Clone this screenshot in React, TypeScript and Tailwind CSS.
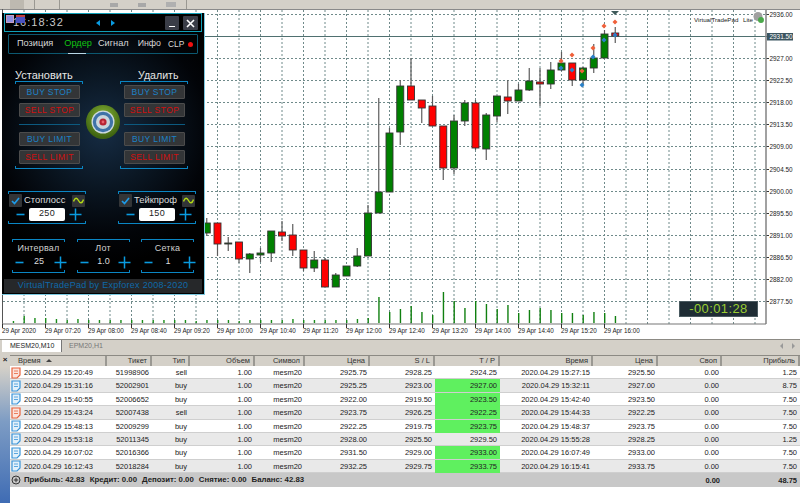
import React from "react";

type Candle = [number, number, number, number, "g" | "r"];

// body top, body bottom, wick top, wick bottom, colour; first entry sits at column 19
const candles: Candle[] = [
  [223, 233, 218, 236, "g"], [223, 244, 223, 256, "r"], [243, 244, 237, 251, "g"], [242, 259, 242, 263, "r"],
  [254, 259, 253, 273, "g"], [253, 255, 248, 262, "g"], [231, 253, 231, 262, "g"], [232, 236, 221, 241, "r"],
  [235, 250, 224, 256, "r"], [250, 268, 250, 271, "r"], [260, 268, 251, 272, "g"], [260, 287, 258, 287, "r"],
  [275, 287, 273, 287, "g"], [266, 276, 266, 276, "g"], [256, 266, 248, 267, "g"], [213, 256, 205, 256, "g"],
  [192, 213, 98, 213, "g"], [133, 192, 128, 192, "g"], [86, 132, 80, 145, "g"], [86, 100, 58, 100, "r"],
  [100, 108, 100, 123, "r"], [106, 126, 96, 126, "r"], [126, 168, 126, 180, "r"], [121, 168, 115, 174, "g"],
  [103, 121, 100, 126, "g"], [103, 148, 100, 150, "r"], [115, 149, 113, 160, "g"], [96, 116, 96, 122, "g"],
  [97, 101, 80, 114, "r"], [90, 101, 84, 101, "g"], [81, 90, 68, 91, "g"], [82, 84, 68, 106, "r"],
  [70, 84, 62, 89, "g"], [63, 70, 52, 71, "g"], [63, 80, 63, 86, "r"], [68, 80, 67, 85, "g"],
  [58, 68, 44, 73, "g"], [34, 58, 30, 58, "g"], [33, 36, 27, 43, "r"],
];

const colX = (n: number) => 2.5 + 10.75 * n;

const leftVolumes = [2, 7, 5, 5, 4, 3, 4, 3, 3, 3, 3, 3, 3, 3, 3, 3, 3, 2, 3, 3, 3, 2, 3, 3, 3, 3, 4, 3, 3, 3, 3, 3, 4];
const rightVolumeTops = [318, 297, 312, 309, 306, 312, 315, 292, 301, 308, 301, 304, 309, 305, 313, 310, 308, 310, 313, 313, 315, 312, 313, 316];

const prices = ["2936.00", "2931.50", "2927.00", "2922.50", "2918.00", "2913.50", "2909.00", "2904.50", "2900.00", "2895.50", "2891.00", "2886.50", "2882.00", "2877.50"];
const times = ["29 Apr 2020", "29 Apr 07:20", "29 Apr 08:00", "29 Apr 08:40", "29 Apr 09:20", "29 Apr 10:00", "29 Apr 10:40", "29 Apr 11:20", "29 Apr 12:00", "29 Apr 12:40", "29 Apr 13:20", "29 Apr 14:00", "29 Apr 14:40", "29 Apr 15:20", "29 Apr 16:00"];

const orangeMarks = [[604, 26], [615, 22], [593, 48], [561, 61], [572, 55], [582, 71]];
const blueMarks = [[604, 40], [615, 35], [593, 57], [561, 68], [572, 70], [582, 85]];

const columns = "grid grid-cols-[97px_45px_38px_65px_50px_65px_65px_65px_93px_65px_64px_78px]";

const headers = ["Время", "Тикет", "Тип", "Объем", "Символ", "Цена", "S / L", "T / P", "Время", "Цена", "Своп", "Прибыль"];

const trades = [
  ["15:20:49", "51998906", "sell", "2925.75", "2928.25", "2924.25", "15:27:15", "2925.50", "1.25", false],
  ["15:31:16", "52002901", "buy", "2925.25", "2923.00", "2927.00", "15:32:11", "2927.00", "8.75", true],
  ["15:40:55", "52006652", "buy", "2922.00", "2919.50", "2923.50", "15:42:40", "2923.50", "7.50", true],
  ["15:43:24", "52007438", "sell", "2923.75", "2926.25", "2922.25", "15:44:33", "2922.25", "7.50", true],
  ["15:48:13", "52009299", "buy", "2922.25", "2919.75", "2923.75", "15:48:37", "2923.75", "7.50", true],
  ["15:53:18", "52011345", "buy", "2928.00", "2925.50", "2929.50", "15:55:28", "2928.25", "1.25", false],
  ["16:07:02", "52016366", "buy", "2931.50", "2929.00", "2933.00", "16:07:49", "2933.00", "7.50", true],
  ["16:12:43", "52018284", "buy", "2932.25", "2929.75", "2933.75", "16:15:41", "2933.75", "7.50", true],
] as const;

const Chart = () => (
  <svg className="block w-[800px] h-[330px]" viewBox="0 9 800 330">
    <rect x="0" y="9" width="800" height="330" fill="#fff" />
    <line x1="0" x2="800" y1="9.5" y2="9.5" stroke="#8a8a8a" />
    <line x1="2.5" x2="2.5" y1="9" y2="324" stroke="#555" />
    {Array.from({ length: 35 }, (_, i) => (
      <line key={i} x1={2.5 + 21.5 * (i + 1)} x2={2.5 + 21.5 * (i + 1)} y1="10" y2="324" stroke="#6f8a8a" strokeDasharray="2 2" />
    ))}
    {prices.map((p, i) => {
      const y = Math.round(14.3 + 22.03 * i) + 0.5;
      return (
        <g key={p}>
          <line x1="3" x2="766" y1={y} y2={y} stroke="#6f8a8a" strokeDasharray="2 2" />
          <line x1="766" x2="769" y1={y} y2={y} stroke="#333" />
          <text x="769.5" y={y + 2.5} fontSize="6.4" fill="#222">{p}</text>
        </g>
      );
    })}
    <line x1="3" x2="766" y1="36.5" y2="36.5" stroke="#4f7070" />
    <line x1="766" x2="766" y1="9" y2="324" stroke="#8a8a8a" strokeWidth="1.6" />
    <line x1="2" x2="766" y1="324" y2="324" stroke="#777" strokeWidth="1.2" />
    {times.map((t, i) => (
      <g key={t}>
        <line x1={2.5 + 43 * i} x2={2.5 + 43 * i} y1="324" y2="328" stroke="#333" />
        <text x={2 + 43 * i} y="333" fontSize="6.3" fill="#222">{t}</text>
      </g>
    ))}
    {leftVolumes.map((h, i) => (
      <rect key={i} x={colX(i + 1) - 0.5} y={323 - h} width="1.4" height={h} fill="#1a8a1a" />
    ))}
    {rightVolumeTops.map((top, i) => (
      <rect key={i} x={colX(i + 34) - 0.5} y={top} width="1.4" height={323 - top} fill="#108010" />
    ))}
    {candles.map(([bt, bb, wt, wb, c], i) => {
      const x = colX(i + 19);
      return (
        <g key={i}>
          <line x1={x} x2={x} y1={wt} y2={wb} stroke="#5c5c5c" strokeWidth="1.2" />
          <rect x={x - 3.5} y={bt} width="7" height={bb - bt} fill={c === "g" ? "#008000" : "#ff0000"} stroke="#333" strokeWidth="0.9" />
        </g>
      );
    })}
    {orangeMarks.map(([x, y]) => (
      <polygon key={`${x}o`} points={`${x},${y - 2.5} ${x + 2.5},${y} ${x},${y + 2.5} ${x - 2.5},${y}`} fill="#f0603a" />
    ))}
    {blueMarks.map(([x, y]) => (
      <polygon key={`${x}b`} points={`${x},${y - 2.5} ${x + 2.5},${y} ${x},${y + 2.5} ${x - 2.5},${y}`} fill="#2a80c8" />
    ))}
    <polygon points="611,11 619,11 615,15" fill="#3f5a5a" />
    <rect x="767" y="33" width="26" height="7.5" fill="#3b5560" />
    <text x="769.5" y="39" fontSize="6.4" fill="#fff">2931.50</text>
    <text x="694" y="21.5" fontSize="6.2" fill="#222">VirtualTradePad</text>
    <text x="743" y="21.5" fontSize="6.2" fill="#222">Lite</text>
    <circle cx="758" cy="16.5" r="4.5" fill="#a0a0a0" />
    <circle cx="761" cy="20" r="3" fill="#4aa84a" />
  </svg>
);

const Bracket = ({ bottom = false }: { bottom?: boolean }) => (
  <div className={bottom ? "h-[3px] border-x border-b border-[#0a86c4] rounded-b-[1px]" : "h-[3px] border-x border-t border-[#0a86c4] rounded-t-[1px]"} />
);

const Btn = ({ label, sell = false, className = "" }: { label: string; sell?: boolean; className?: string }) => (
  <div className={`h-[14px] flex items-center justify-center bg-[#333537] border border-[#4c4c4c] rounded-[1px] text-[8.5px] tracking-[0.4px] ${sell ? "text-[#d01010]" : "text-[#1c82c8]"} ${className}`}>
    {label}
  </div>
);

const Sign = ({ plus = false }: { plus?: boolean }) =>
  plus ? (
    <svg width="13" height="13" viewBox="0 0 13 13" className="shrink-0">
      <path d="M0.5 6.5h12M6.5 0.5v12" stroke="#0a9be0" strokeWidth="1.5" />
    </svg>
  ) : (
    <svg width="9" height="3" viewBox="0 0 9 3" className="shrink-0">
      <path d="M0.5 1.5h8" stroke="#0a9be0" strokeWidth="1.6" />
    </svg>
  );

const Wave = () => (
  <div className="w-[13px] h-[12px] flex items-center justify-center bg-[#333537] rounded-[1px]">
    <svg width="11" height="7" viewBox="0 0 11 7">
      <path d="M0.5 4.5C2 0 4 0.5 5.5 3.5S9 7 10.5 2.5" fill="none" stroke="#b4dc14" strokeWidth="1.4" />
    </svg>
  </div>
);

const Check = () => (
  <div className="w-[13px] h-[13px] flex items-center justify-center bg-[#333537] rounded-[1px]">
    <svg width="9" height="8" viewBox="0 0 9 8">
      <path d="M1 4l2.5 2.5L8 1" fill="none" stroke="#1d9be8" strokeWidth="1.7" />
    </svg>
  </div>
);

const OrderColumn = ({ title, titleClass }: { title: string; titleClass: string }) => (
  <div className="w-[68px] flex flex-col">
    <div className={`h-[11px] leading-[10px] whitespace-nowrap text-[#e6e6e6] ${titleClass}`}>{title}</div>
    <Bracket />
    <div className="flex flex-col pl-[4px] pr-[3px] pt-[1px]">
      <Btn label="BUY STOP" />
      <Btn label="SELL STOP" sell className="mt-[4px]" />
      <div className="h-[1px] mt-[7px] mb-[7px] bg-[#0c5a80]" />
      <Btn label="BUY LIMIT" />
      <Btn label="SELL LIMIT" sell className="mt-[4px]" />
    </div>
    <div className="mt-[2px]">
      <Bracket bottom />
    </div>
  </div>
);

const Target = () => (
  <svg width="34" height="34" viewBox="0 0 34 34" className="block">
    <defs>
      <radialGradient id="rim" cx="50%" cy="35%" r="60%">
        <stop offset="0%" stopColor="#8ab83a" />
        <stop offset="100%" stopColor="#3f6410" />
      </radialGradient>
    </defs>
    <circle cx="17" cy="17" r="17" fill="url(#rim)" />
    <circle cx="17" cy="17" r="11.5" fill="#cfdbe0" />
    <circle cx="17" cy="17" r="10.2" fill="#3f73a8" />
    <circle cx="17" cy="17" r="7" fill="#c9d5dc" />
    <circle cx="17" cy="17" r="3.6" fill="#b52434" />
    <circle cx="17" cy="17" r="1.4" fill="#e8606c" />
  </svg>
);

const StopGroup = ({ label, value }: { label: string; value: string }) => (
  <div className="w-[78px] flex flex-col">
    <Bracket />
    <div className="h-[13px] flex items-center justify-between pl-[1px] pr-[1px]">
      <Check />
      <span className="flex-1 pl-[2px] text-[9.4px] text-[#dcdcdc]">{label}</span>
      <Wave />
    </div>
    <div className="h-[14px] flex items-center justify-center gap-[4px] pl-[4px]">
      <Sign />
      <div className="w-[36px] h-[13px] bg-white rounded-[2px] flex items-center justify-center text-[9px] text-[#222] tracking-[0.3px]">{value}</div>
      <Sign plus />
    </div>
    <Bracket bottom />
  </div>
);

const StepGroup = ({ label, value }: { label: string; value: string }) => (
  <div className="w-[53px] flex flex-col">
    <Bracket />
    <div className="h-[12px] leading-[12px] text-center text-[9px] text-[#d0d0d0] tracking-[0.2px]">{label}</div>
    <div className="h-[16px] flex items-center justify-between pl-[3px] -mr-[2px]">
      <Sign />
      <span className="text-[9px] text-[#dcdcdc]">{value}</span>
      <Sign plus />
    </div>
    <Bracket bottom />
  </div>
);

const Panel = () => (
  <div className="absolute left-[2px] top-[4px] w-[203px] h-[282px] flex flex-col border-r border-b border-[#7ac8e0] bg-[radial-gradient(circle_at_50%_42%,#162c44_0,#0a1622_30%,#020408_55%,#000_70%)] text-[#e0e0e0]">
    <div className="relative mx-[2px] h-[19px] shrink-0 flex items-center border border-[#10a0b8] bg-black">
      <div className="absolute left-[1px] top-[1px] w-[8px] h-[8px] bg-[#8f8fe0] border border-[#c8a0c0]" />
      <div className="absolute left-[11px] top-[1px] w-[9px] h-[8px] bg-[#4a52c0] border-t-2 border-[#c04040]" />
      <span className="ml-[8px] text-[11px] text-[#c8c8c8] tracking-[1px]">16:18:32</span>
      <span className="absolute left-[91px] top-[6px] w-0 h-0 border-y-[3.5px] border-r-[4px] border-y-transparent border-r-[#0a9be0]" />
      <span className="absolute left-[106px] top-[6px] w-0 h-0 border-y-[3.5px] border-l-[4px] border-y-transparent border-l-[#0a9be0]" />
      <div className="absolute right-[22px] top-[2px] w-[14px] h-[14px] bg-[#3a3d47] rounded-[1px] flex items-end justify-center pb-[3px]">
        <div className="w-[6px] h-[1.5px] bg-white" />
      </div>
      <div className="absolute right-[3px] top-[2px] w-[15px] h-[14px] bg-[#3a3d47] rounded-[1px] flex items-center justify-center">
        <svg width="9" height="9" viewBox="0 0 9 9">
          <path d="M1 1l7 7M8 1l-7 7" stroke="#fff" strokeWidth="1.6" />
        </svg>
      </div>
    </div>
    <div className="relative mt-[2px] mx-[6px] h-[20px] shrink-0 flex items-center text-[9.2px] border border-[#0c5870] rounded-[1px]">
      <span className="ml-[8px] text-[#d8d8d8]">Позиция</span>
      <span className="ml-[11px] text-[#12c412]">Ордер</span>
      <span className="ml-[6px] text-[#d8d8d8]">Сигнал</span>
      <span className="ml-[9px] text-[8.8px] text-[#d8d8d8]">Инфо</span>
      <span className="ml-[7px] text-[8.4px] text-[#d8d8d8]">CLP</span>
      <span className="ml-[4px] w-[5px] h-[5px] rounded-full bg-[#f01010]" />
      <div className="absolute left-[59px] bottom-[-1px] w-[18px] h-[1.5px] bg-[#b8d8e8]" />
    </div>
    <div className="flex justify-between pl-[13px] pr-[16px] pt-[16px]">
      <OrderColumn title="Установить" titleClass="text-[11px]" />
      <div className="w-[37px] flex items-center justify-end pt-[4px]">
        <Target />
      </div>
      <OrderColumn title="Удалить" titleClass="text-[10.6px] pl-[18px]" />
    </div>
    <div className="flex justify-between pl-[6px] pr-[8px] mt-[22px]">
      <StopGroup label="Стоплосс" value="250" />
      <StopGroup label="Тейкпроф" value="150" />
    </div>
    <div className="flex gap-[11.5px] pl-[10px] mt-[15px]">
      <StepGroup label="Интервал" value="25" />
      <StepGroup label="Лот" value="1.0" />
      <StepGroup label="Сетка" value="1" />
    </div>
    <div className="mt-auto mx-[2px] mb-[1px] h-[14px] flex items-center justify-center bg-[#26282a] text-[9px] tracking-[0.28px] text-[#0e68a8]">
      VirtualTradePad by Expforex 2008-2020
    </div>
  </div>
);

const DocIcon = ({ sell }: { sell: boolean }) => (
  <svg width="10" height="12" viewBox="0 0 10 12" className="shrink-0">
    <path d="M1 1h8v7l-3 3H1z" fill={sell ? "#fbe3dc" : "#e3f1fb"} stroke={sell ? "#e8633c" : "#3a94d8"} strokeWidth="1.2" />
    <path d="M3 4h4M3 6.5h4" stroke={sell ? "#e8633c" : "#3a94d8"} strokeWidth="0.8" />
  </svg>
);

const Cell = ({ children, green = false }: { children: React.ReactNode; green?: boolean }) => (
  <div className={`pr-[3px] text-right leading-[13px] ${green ? "bg-[#5ff05f]" : ""}`}>{children}</div>
);

const TradeTable = () => (
  <div className="flex-1 flex flex-col text-[7.5px] text-[#222]">
    <div className={`${columns} h-[11px] bg-[#d4d0c8] border-t border-[#8c8a84] text-[#333]`}>
      {headers.map((h, i) => (
        <div key={i} className={`relative h-[10px] leading-[10px] pr-[3px] border-r-2 border-[#9a9892] ${i === 0 ? "text-left pl-[8px]" : "text-right"}`}>
          {h}
          {i === 0 && <span className="absolute left-[36px] top-[3px] w-0 h-0 border-x-[3px] border-b-[3px] border-x-transparent border-b-[#444]" />}
        </div>
      ))}
    </div>
    {trades.map((t, r) => (
      <div key={t[1]} className={`${columns} h-[13.4px] border-b border-[#cfcfcf] ${r % 2 ? "bg-[#e9e9e9]" : "bg-white"}`}>
        <div className="flex items-center gap-[3px] pl-[1px] leading-[13px]">
          <DocIcon sell={t[2] === "sell"} />
          <span>2020.04.29 {t[0]}</span>
        </div>
        <Cell>{t[1]}</Cell>
        <Cell>{t[2]}</Cell>
        <Cell>1.00</Cell>
        <Cell>mesm20</Cell>
        <Cell>{t[3]}</Cell>
        <Cell>{t[4]}</Cell>
        <Cell green={t[9]}>{t[5]}</Cell>
        <Cell>2020.04.29 {t[6]}</Cell>
        <Cell>{t[7]}</Cell>
        <Cell>0.00</Cell>
        <Cell>{t[8]}</Cell>
      </div>
    ))}
    <div className="h-[14px] flex items-center bg-[#c8c8c8] font-bold">
      <svg width="10" height="10" viewBox="0 0 10 10" className="ml-[1px] shrink-0">
        <circle cx="5" cy="5" r="4" fill="none" stroke="#333" />
        <path d="M2.8 5h4.4M5 2.8v4.4" stroke="#333" />
      </svg>
      <div className="ml-[3px] w-[570px] flex gap-[5px] text-[7.8px]">
        <span>Прибыль: 42.83</span>
        <span>Кредит: 0.00</span>
        <span>Депозит: 0.00</span>
        <span>Снятие: 0.00</span>
        <span>Баланс: 42.83</span>
      </div>
      <span className="w-[129px] text-right pr-[3px]">0.00</span>
      <span className="w-[77px] text-right pr-[3px]">48.75</span>
    </div>
  </div>
);

export default function App() {
  return (
    <div className="w-[800px] h-[503px] overflow-hidden bg-white flex flex-col font-['Liberation_Sans',sans-serif]">
      <div className="h-[9px] flex items-center bg-[#d4d0c8] text-[#666]">
        <div className="ml-[10px] w-[14px] h-[9px] bg-[#bdb9b0]" />
        <div className="ml-[10px] w-[1px] h-[9px] bg-[#9a9892]" />
        <div className="ml-[24px] w-[1px] h-[9px] bg-[#9a9892]" />
        <div className="ml-[50px] w-[8px] h-[4px] bg-[#a8a8a8]" />
        <div className="ml-[20px] w-[8px] h-[4px] bg-[#a8a8a8]" />
        <div className="ml-[20px] w-[10px] h-[5px] bg-[#b0b0b0]" />
        <div className="ml-[10px] w-[1px] h-[9px] bg-[#9a9892]" />
      </div>
      <div className="relative h-[330px] shrink-0">
        <Chart />
        <Panel />
        <div className="absolute left-[679px] top-[292px] w-[79px] h-[16px] flex items-center justify-center bg-[#1f2d35] border border-[#4a5a60] text-[13px] tracking-[0.4px] text-[#9acd32]">
          -00:01:28
        </div>
      </div>
      <div className="relative h-[16px] shrink-0 flex bg-[#d4d0c8] border-t border-[#8c8a84] text-[7px]">
        <div className="ml-[2px] w-[60px] h-[12px] leading-[12px] pl-[8px] bg-white border-r border-[#777] text-[#222]">MESM20,M10</div>
        <div className="ml-[7px] leading-[12px] h-[12px] text-[#777]">EPM20,H1</div>
        <span className="absolute right-[17px] top-[3px] w-0 h-0 border-y-[3px] border-r-[3px] border-y-transparent border-r-[#999]" />
        <span className="absolute right-[5px] top-[3px] w-0 h-0 border-y-[3px] border-l-[3px] border-y-transparent border-l-[#999]" />
      </div>
      <div className="flex flex-1">
        <div className="w-[10px] pt-[1px] bg-[linear-gradient(to_bottom,#d4d0c8_8%,#7d9cc4_45%,#3f6cb4_100%)] text-[8px] leading-[8px] text-center text-[#222] font-bold">×</div>
        <TradeTable />
      </div>
    </div>
  );
}
